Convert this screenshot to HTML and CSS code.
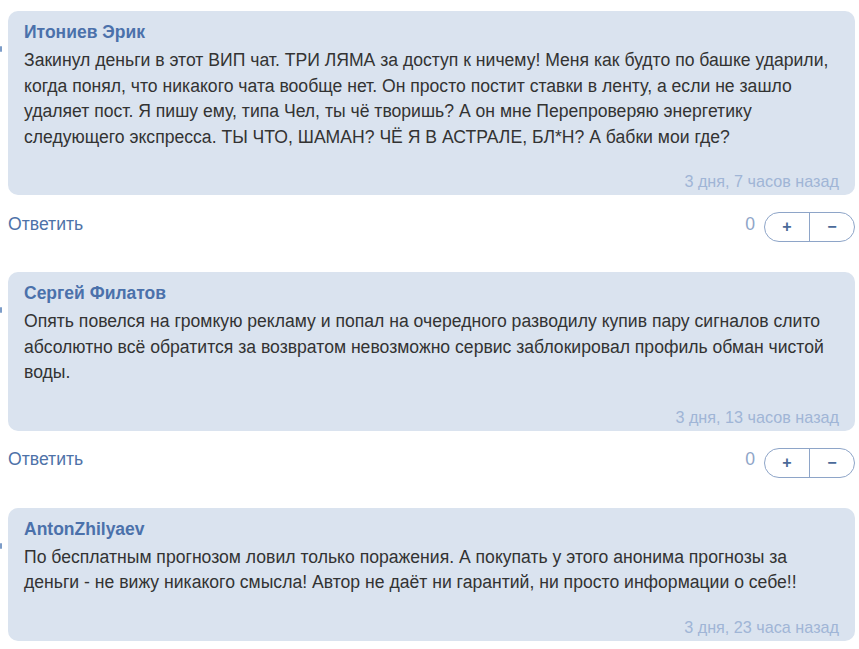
FILE: index.html
```html
<!DOCTYPE html>
<html lang="ru">
<head>
<meta charset="utf-8">
<link rel="stylesheet" href="styles.css">
</head>
<body>
<div class="list">
  <div class="comment">
    <div class="card">
      <span class="tail"></span>
      <div class="author">Итониев Эрик</div>
      <div class="text">Закинул деньги в этот ВИП чат. ТРИ ЛЯМА за доступ к ничему! Меня как будто по башке ударили, когда понял, что никакого чата вообще нет. Он просто постит ставки в ленту, а если не зашло удаляет пост. Я пишу ему, типа Чел, ты чё творишь? А он мне Перепроверяю энергетику следующего экспресса. ТЫ ЧТО, ШАМАН? ЧЁ Я В АСТРАЛЕ, БЛ*Н? А бабки мои где?</div>
      <div class="time">3 дня, 7 часов назад</div>
    </div>
    <div class="actions">
      <a class="reply">Ответить</a>
      <div class="votes">
        <span class="score">0</span>
        <div class="vote-btns"><span class="vb">+</span><span class="vb">−</span></div>
      </div>
    </div>
  </div>
  <div class="comment">
    <div class="card">
      <span class="tail"></span>
      <div class="author">Сергей Филатов</div>
      <div class="text">Опять повелся на громкую рекламу и попал на очередного разводилу купив пару сигналов слито абсолютно всё обратится за возвратом невозможно сервис заблокировал профиль обман чистой воды.</div>
      <div class="time">3 дня, 13 часов назад</div>
    </div>
    <div class="actions">
      <a class="reply">Ответить</a>
      <div class="votes">
        <span class="score">0</span>
        <div class="vote-btns"><span class="vb">+</span><span class="vb">−</span></div>
      </div>
    </div>
  </div>
  <div class="comment">
    <div class="card">
      <span class="tail"></span>
      <div class="author">AntonZhilyaev</div>
      <div class="text">По бесплатным прогнозом ловил только поражения. А покупать у этого анонима прогнозы за деньги - не вижу никакого смысла! Автор не даёт ни гарантий, ни просто информации о себе!!</div>
      <div class="time">3 дня, 23 часа назад</div>
    </div>
  </div>
</div>
</body>
</html>
```

FILE: styles.css
```css
html, body {
  margin: 0;
  padding: 0;
  background: #fff;
}
body {
  font-family: "Liberation Sans", Arial, sans-serif;
  color: #333;
  padding: 11px 4px 0 8px;
}
.comment {
  margin-bottom: 30px;
}
.card {
  position: relative;
  background: #dae3ef;
  border-radius: 10px;
  padding: 9px 16px 4px 16px;
}
.tail {
  position: absolute;
  left: -8px;
  top: 35px;
  width: 2px;
  height: 6px;
  background: #7c9cc8;
  border-radius: 1px;
}
.author {
  font-size: 17.5px;
  font-weight: bold;
  line-height: 24px;
  color: #4b71ab;
}
.text {
  font-size: 17.6px;
  line-height: 25.5px;
  margin-top: 4px;
  color: #333;
}
.time {
  text-align: right;
  font-size: 16.2px;
  line-height: 20px;
  color: #a0b5d6;
  margin-top: 21px;
}
.actions {
  display: flex;
  align-items: center;
  justify-content: space-between;
  margin-top: 17px;
  height: 30px;
}
.reply {
  font-size: 17.6px;
  color: #4e72a8;
  margin-top: -6px;
}
.votes {
  display: flex;
  align-items: center;
  gap: 9px;
}
.score {
  font-size: 17.6px;
  color: #8fa5c8;
  margin-top: -6px;
}
.vote-btns {
  display: flex;
  width: 89px;
  height: 28px;
  border: 1px solid #8ea5c8;
  border-radius: 15px;
  overflow: hidden;
}
.vb {
  flex: 1;
  display: flex;
  align-items: center;
  justify-content: center;
  font-size: 16px;
  font-weight: bold;
  color: #4b6a98;
}
.vb + .vb {
  border-left: 1px solid #8ea5c8;
}
```
